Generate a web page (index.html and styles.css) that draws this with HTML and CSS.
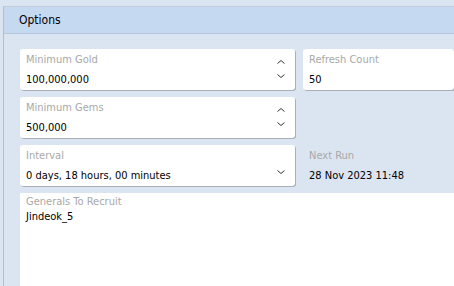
FILE: index.html
```html
<!DOCTYPE html>
<html lang="en">
<head>
  <meta charset="UTF-8" />
  <title>Options</title>
  <link rel="stylesheet" href="styles.css">
</head>
<body>

<div class="panel">
  <div class="panel-head">Options</div>
  <div class="panel-body">
    <div class="field">
      <div class="field-text">
        <span class="label">Minimum Gold</span>
        <span class="value">100,000,000</span>
      </div>
      <div class="spin">
        <svg width="8" height="4" viewBox="0 0 8 4"><path d="M0.5 3.5 L4 0.5 L7.5 3.5" /></svg>
        <svg width="8" height="4" viewBox="0 0 8 4"><path d="M0.5 0.5 L4 3.5 L7.5 0.5" /></svg>
      </div>
    </div>
    <div class="field">
      <div class="field-text">
        <span class="label">Refresh Count</span>
        <span class="value">50</span>
      </div>
    </div>

    <div class="field">
      <div class="field-text">
        <span class="label">Minimum Gems</span>
        <span class="value">500,000</span>
      </div>
      <div class="spin">
        <svg width="8" height="4" viewBox="0 0 8 4"><path d="M0.5 3.5 L4 0.5 L7.5 3.5" /></svg>
        <svg width="8" height="4" viewBox="0 0 8 4"><path d="M0.5 0.5 L4 3.5 L7.5 0.5" /></svg>
      </div>
    </div>
    <div></div>

    <div class="field">
      <div class="field-text">
        <span class="label">Interval</span>
        <span class="value">0 days, 18 hours, 00 minutes</span>
      </div>
      <div class="spin drop">
        <svg width="8" height="4" viewBox="0 0 8 4"><path d="M0.5 0.5 L4 3.5 L7.5 0.5" /></svg>
      </div>
    </div>
    <div class="field plain">
      <div class="field-text">
        <span class="label">Next Run</span>
        <span class="value">28 Nov 2023 11:48</span>
      </div>
    </div>

    <div class="field memo">
      <span class="label">Generals To Recruit</span>
      <span class="value">Jindeok_5</span>
    </div>
  </div>
</div>

</body>
</html>
```

FILE: styles.css
```css
html {
  overflow: hidden;
}
body {
  margin: 0;
  padding: 6px 0 0 3px;
  height: 286px;
  box-sizing: border-box;
  background: #dbe5f1;
  font-family: "DejaVu Sans Condensed", "DejaVu Sans", Tahoma, sans-serif;
  font-size: 11px;
  color: #000;
  overflow: hidden;
}
.panel {
  border-left: 1px solid #b4bfcc;
  border-top: 1px solid #c3ccd8;
  background: #dbe5f1;
  height: 100%;
  box-sizing: border-box;
  display: flex;
  flex-direction: column;
}
.panel-head {
  height: 26px;
  line-height: 26px;
  padding-left: 15px;
  background: #c5d9f1;
  border-bottom: 1px solid #b6c6da;
  font-size: 12px;
}
.panel-body {
  flex: 1;
  display: grid;
  grid-template-columns: 275px 1fr;
  grid-template-rows: 41px 41px 41px 1fr;
  gap: 7px 8px;
  padding: 15px 0 0 16px;
}
.field {
  display: flex;
  align-items: stretch;
  background: #fff;
  border-radius: 3px;
  box-shadow: 1px 1px 0 #a9afb6;
}
.field.plain {
  background: none;
  box-shadow: none;
}
.field-text {
  flex: 1;
  display: flex;
  flex-direction: column;
  padding: 2px 6px;
}
.label {
  color: #a8a8a8;
  height: 17px;
  line-height: 17px;
}
.value {
  line-height: 24px;
}
.spin {
  width: 28px;
  display: flex;
  flex-direction: column;
  align-items: center;
  justify-content: space-between;
  padding: 11px 0 12px;
}
.spin.drop {
  justify-content: flex-end;
}
.spin path {
  fill: none;
  stroke: #333;
  stroke-width: 1;
}
.field.memo {
  grid-column: 1 / 3;
  flex-direction: column;
  padding: 1px 6px;
  box-shadow: none;
  border-radius: 0;
}
.memo .label {
  height: 15px;
  line-height: 15px;
}
.memo .value {
  line-height: 16px;
}
```
